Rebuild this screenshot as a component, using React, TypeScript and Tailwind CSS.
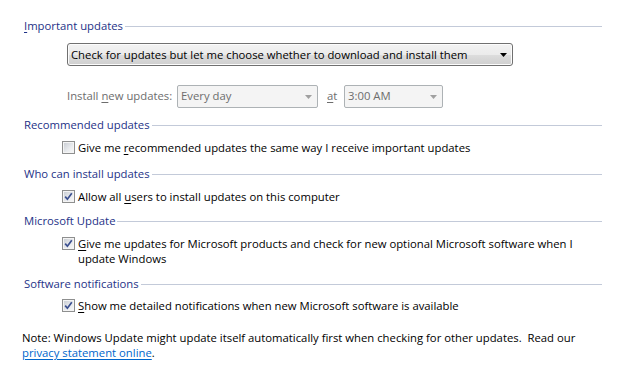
import React from "react";

const font = { fontFamily: '"Open Sans", "Noto Sans", sans-serif' };

function Heading({ children }: { children: React.ReactNode }) {
  return (
    <div className="flex h-[16px] items-center pl-[24px] pr-[21px]">
      <span className="whitespace-nowrap text-[#1e3287] leading-[16px]">{children}</span>
      <div className="ml-[2px] h-px flex-1 bg-[#c3cad9]" />
    </div>
  );
}

function Check({ checked }: { checked: boolean }) {
  return (
    <span className="mt-[1px] flex h-[13px] w-[13px] shrink-0 items-center justify-center border border-[#8e8f8f] bg-white">
      <span className="relative flex h-[11px] w-[11px] items-center justify-center border border-[#f4f4f4] bg-[linear-gradient(135deg,#cbcfd5_0%,#e9ebee_60%,#f6f6f6_100%)]">
        {checked && (
          <svg width="9" height="9" viewBox="0 0 9 9" className="absolute left-[0px] top-[0px]">
            <path d="M1.2 4.6 L3.4 7.2 L7.8 1.2" fill="none" stroke="#3b4f8f" strokeWidth="1.7" strokeLinejoin="miter" />
          </svg>
        )}
      </span>
    </span>
  );
}

function CheckRow({ checked, children }: { checked: boolean; children: React.ReactNode }) {
  return (
    <div className="flex items-start gap-[3px] pl-[62px] pr-[44px] text-black leading-[15px]">
      <Check checked={checked} />
      <span>{children}</span>
    </div>
  );
}

function Arrow({ color }: { color: string }) {
  return (
    <svg width="7" height="4" viewBox="0 0 7 4">
      <path d="M0 0 H7 L3.5 4 Z" fill={color} />
    </svg>
  );
}

export default function App() {
  return (
    <div className="h-[390px] w-[623px] overflow-hidden bg-white text-[11.3px]" style={font}>
      <div className="pt-[18px]">
        <Heading>
          <span className="underline underline-offset-2">I</span>mportant updates
        </Heading>

        <div className="mt-[9px] pl-[67px]">
          <div className="flex h-[23px] w-[446px] items-center justify-between rounded-[3px] border border-[#707070] bg-[linear-gradient(to_bottom,#f2f2f2_0%,#ebebeb_50%,#dddddd_50%,#cfcfcf_100%)] pl-[3px] pr-[5px] text-black shadow-[inset_0_0_0_1px_#fcfcfc]">
            <span className="whitespace-nowrap leading-[15px]">Check for updates but let me choose whether to download and install them</span>
            <Arrow color="#000" />
          </div>
        </div>

        <div className="mt-[19px] flex items-center pl-[67px] text-[#6d6d6d]">
          <span className="w-[110px] whitespace-nowrap">
            Install <span className="underline underline-offset-2">n</span>ew updates:
          </span>
          <div className="flex h-[23px] w-[141px] items-center justify-between rounded-[2px] border border-[#adb2b5] bg-[#f4f4f4] pl-[3px] pr-[5px]">
            <span>Every day</span>
            <Arrow color="#a0a0a0" />
          </div>
          <span className="ml-[9px] w-[17px] whitespace-nowrap">
            <span className="underline underline-offset-2">a</span>t
          </span>
          <div className="flex h-[23px] w-[99px] items-center justify-between rounded-[2px] border border-[#adb2b5] bg-[#f4f4f4] pl-[3px] pr-[5px]">
            <span>3:00 AM</span>
            <Arrow color="#a0a0a0" />
          </div>
        </div>

        <div className="mt-[9px]">
          <Heading>Recommended updates</Heading>
        </div>
        <div className="mt-[7px]">
          <CheckRow checked={false}>
            Give me <span className="underline underline-offset-2">r</span>ecommended updates the same way I receive important updates
          </CheckRow>
        </div>

        <div className="mt-[11px]">
          <Heading>Who can install updates</Heading>
        </div>
        <div className="mt-[7px]">
          <CheckRow checked={true}>
            Allow all <span className="underline underline-offset-2">u</span>sers to install updates on this computer
          </CheckRow>
        </div>

        <div className="mt-[9px]">
          <Heading>Microsoft Update</Heading>
        </div>
        <div className="mt-[7px]">
          <CheckRow checked={true}>
            <span className="underline underline-offset-2">G</span>ive me updates for Microsoft products and check for new optional Microsoft software when I update Windows
          </CheckRow>
        </div>

        <div className="mt-[10px]">
          <Heading>Software notifications</Heading>
        </div>
        <div className="mt-[6px]">
          <CheckRow checked={true}>
            <span className="underline underline-offset-2">S</span>how me detailed notifications when new Microsoft software is available
          </CheckRow>
        </div>

        <div className="mt-[17px] pl-[22px] pr-[40px] leading-[15px] text-black">
          Note: Windows Update might update itself automatically first when checking for other updates.&nbsp; Read our{" "}
          <span className="text-[#0066cc] underline underline-offset-2">privacy statement online</span>.
        </div>
      </div>
    </div>
  );
}
